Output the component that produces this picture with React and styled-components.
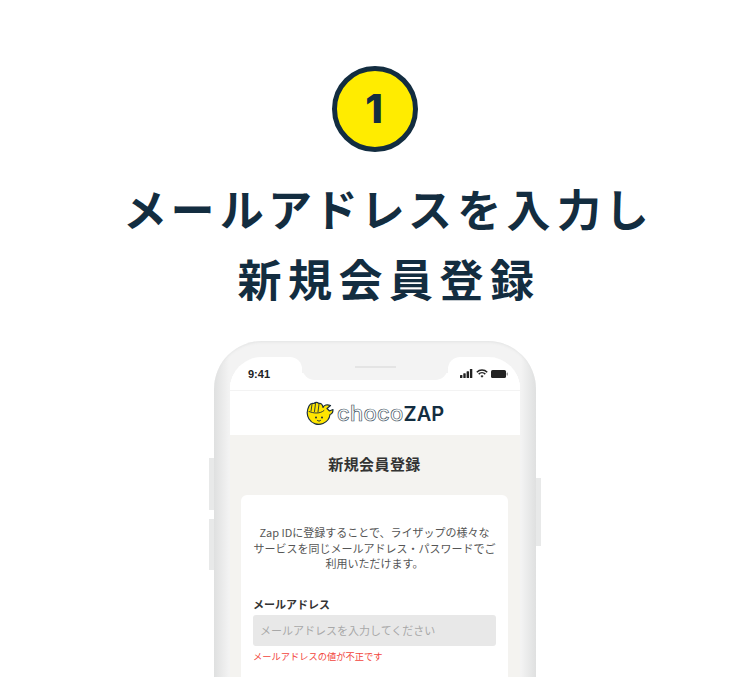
import React from 'react'
import styled, { createGlobalStyle } from 'styled-components'

const navy = '#132d40'
const cjk = '"Noto Sans CJK JP", "Noto Sans", sans-serif'

const GlobalStyle = createGlobalStyle`
  html, body {
    margin: 0;
    padding: 0;
    background: #fff;
  }
  *, *::before, *::after {
    box-sizing: border-box;
  }
`

const Page = styled.main`
  width: 750px;
  height: 677px;
  overflow: hidden;
  display: flex;
  flex-direction: column;
  align-items: center;
  padding-top: 66px;
  background: #fff;
  font-family: ${cjk};
`

const StepBadge = styled.div`
  flex: none;
  width: 86px;
  height: 86px;
  padding-right: 2px;
  border-radius: 50%;
  border: 5px solid ${navy};
  background: #ffec00;
  color: ${navy};
  display: flex;
  align-items: center;
  justify-content: center;
  font-family: Inter, sans-serif;
  font-size: 40px;
  font-weight: 800;
  line-height: 1;
`

const Heading = styled.h1`
  flex: none;
  margin: 21px 0 0;
  padding-left: 28px;
  text-align: center;
  color: ${navy};
  font-size: 44px;
  font-weight: 700;
  line-height: 70px;
  letter-spacing: 6.5px;
  font-feature-settings: "palt";
  white-space: nowrap;
`

const Phone = styled.div`
  position: relative;
  flex: none;
  width: 322px;
  height: 640px;
  margin-top: 28px;
  padding: 16px;
  border-radius: 48px;
  background: linear-gradient(90deg, #dfe0e0 0, #f3f3f3 15px, #f3f3f3 calc(100% - 15px), #dfe0e0 100%);
  box-shadow: inset 0 2px 3px -1px #e2e3e3;
`

const SideButton = styled.span`
  position: absolute;
  top: ${(p) => p.$top}px;
  ${(p) => (p.$right ? 'right: -5px;' : 'left: -5px;')}
  width: 5px;
  height: ${(p) => p.$height}px;
  background: #e8e9e9;
`

const Screen = styled.div`
  height: 100%;
  display: flex;
  flex-direction: column;
  border-radius: 32px;
  overflow: hidden;
  background: #fff;
`

const StatusBar = styled.div`
  flex: none;
  height: 34px;
  display: grid;
  grid-template-columns: 72px 1fr 72px;
  background: linear-gradient(#f3f3f3 50%, #fff 50%);
  border-bottom: 1px solid #f3f3f3;
`

const Ear = styled.div`
  display: flex;
  align-items: center;
  gap: 3px;
  padding: ${(p) => (p.$right ? '0 12px 0 12px' : '0 0 0 18px')};
  background: #fff;
  border-radius: ${(p) => (p.$right ? '12px 0 0 0' : '0 12px 0 0')};
  color: #222;
  font-family: "Liberation Sans", sans-serif;
  font-size: 11px;
  font-weight: 700;
`

const Notch = styled.div`
  height: 23px;
  display: flex;
  justify-content: center;
  padding-top: 9px;
  background: #f3f3f3;
  border-radius: 0 0 13px 13px;

  &::after {
    content: '';
    width: 41px;
    height: 2px;
    background: #e4e4e4;
  }
`

const Brand = styled.header`
  flex: none;
  height: 44px;
  display: flex;
  align-items: center;
  justify-content: center;
  gap: 3px;
  background: #fff;
`

const BrandName = styled.div`
  display: flex;
  align-items: baseline;
  font-family: Inter, sans-serif;
  line-height: 1;
`

const BrandLight = styled.span`
  font-size: 22px;
  font-weight: 500;
  letter-spacing: 0.3px;
  color: #fff;
  -webkit-text-stroke: 0.7px #3f5564;
`

const BrandBold = styled.span`
  font-size: 20px;
  font-weight: 600;
  color: ${navy};
`

const Content = styled.div`
  flex: 1;
  display: flex;
  flex-direction: column;
  padding: 0 12px 0 11px;
  background: #f4f3f0;
`

const PageTitle = styled.h2`
  margin: 0;
  height: 60px;
  padding-bottom: 4px;
  display: flex;
  align-items: center;
  justify-content: center;
  font-size: 15px;
  font-weight: 700;
  letter-spacing: 0.4px;
  color: #333;
`

const Card = styled.section`
  flex: 1;
  padding: 30px 12px 0 12px;
  background: #fff;
  border-radius: 6px 6px 0 0;
`

const Intro = styled.p`
  margin: 0 0 24px;
  font-size: 11px;
  line-height: 15.6px;
  text-align: center;
  color: #555;
`

const FieldLabel = styled.label`
  display: block;
  font-size: 11px;
  font-weight: 700;
  line-height: 16px;
  color: #333;
  margin-bottom: 3px;
`

const TextInput = styled.input`
  display: block;
  width: 100%;
  height: 31px;
  padding: 0 7px;
  border: none;
  border-radius: 3px;
  background: #e8e8e8;
  font-family: ${cjk};
  font-size: 11px;

  &::placeholder {
    color: #a8a8a8;
    opacity: 1;
  }
`

const ErrorText = styled.p`
  margin: 3px 0 0;
  font-size: 9.25px;
  line-height: 14px;
  color: #f2453d;
`

function SignalIcon() {
  return (
    <svg width="13" height="9" viewBox="0 0 13 9" fill="#222">
      <rect x="0" y="6" width="2.4" height="3" rx="0.5" />
      <rect x="3.3" y="4.3" width="2.4" height="4.7" rx="0.5" />
      <rect x="6.6" y="2.3" width="2.4" height="6.7" rx="0.5" />
      <rect x="9.9" y="0" width="2.4" height="9" rx="0.5" />
    </svg>
  )
}

function WifiIcon() {
  return (
    <svg width="12" height="9" viewBox="0 0 12 9" fill="none" stroke="#222" strokeWidth="1.5">
      <path d="M0.8 3.2a7.4 7.4 0 0 1 10.4 0" />
      <path d="M2.7 5.1a4.7 4.7 0 0 1 6.6 0" />
      <path d="M6 8.800 4.500 7a2.100 2.100 0 0 1 3 0z" fill="#222" stroke="none" />
    </svg>
  )
}

function BatteryIcon() {
  return (
    <svg width="17" height="8" viewBox="0 0 17 8">
      <rect x="0" y="0" width="15" height="8" rx="1.6" fill="#222" />
      <rect x="15.6" y="2.6" width="1.2" height="2.8" rx="0.5" fill="#888" />
    </svg>
  )
}

function LogoMark() {
  return (
    <svg width="28" height="25" viewBox="0 0 28 25">
      <path
        d="M3 5C1 9 .5 14 3 18c3 5 9 6.500 14 4.500 4-1.700 6.500-5 7-9 1.800-.5 3-2.500 3-5l-3.500 1.500-2.500-2.500 3.500-3C21 3 18 4 17 6.500 16.500 3.500 15 2 13 2.500 11 1 9 1.500 8 2.500 6 2 4 3 3 5z"
        fill="#ffe600"
        stroke="#1c2f3c"
        strokeWidth="1.200"
        strokeLinejoin="round"
      />
      <path
        d="M6 3.500 5 10M9.500 2.500 8.500 10.500M13 3l-1 8M3 10.500c5 2 11 2.500 15-1"
        fill="none"
        stroke="#1c2f3c"
        strokeWidth="0.900"
        strokeLinecap="round"
      />
      <circle cx="10" cy="16.500" r="1" fill="#1c2f3c" />
      <circle cx="16" cy="16.500" r="1" fill="#1c2f3c" />
      <path d="M11.500 19.500c1 .8 2.200.8 3 0" fill="none" stroke="#1c2f3c" strokeWidth="1" strokeLinecap="round" />
    </svg>
  )
}

export default function App() {
  return (
    <>
      <GlobalStyle />
      <Page>
        <StepBadge>1</StepBadge>
        <Heading>
          メールアドレスを入力し
          <br />
          新規会員登録
        </Heading>
        <Phone>
          <SideButton $top={117} $height={52} />
          <SideButton $top={178} $height={51} />
          <SideButton $right $top={137} $height={68} />
          <Screen>
            <StatusBar>
              <Ear>9:41</Ear>
              <Notch />
              <Ear $right>
                <SignalIcon />
                <WifiIcon />
                <BatteryIcon />
              </Ear>
            </StatusBar>
            <Brand>
              <LogoMark />
              <BrandName>
                <BrandLight>choco</BrandLight>
                <BrandBold>ZAP</BrandBold>
              </BrandName>
            </Brand>
            <Content>
              <PageTitle>新規会員登録</PageTitle>
              <Card>
                <Intro>
                  Zap IDに登録することで、ライザップの様々な
                  <br />
                  サービスを同じメールアドレス・パスワードでご
                  <br />
                  利用いただけます。
                </Intro>
                <FieldLabel htmlFor="email">メールアドレス</FieldLabel>
                <TextInput id="email" placeholder="メールアドレスを入力してください" />
                <ErrorText>メールアドレスの値が不正です</ErrorText>
              </Card>
            </Content>
          </Screen>
        </Phone>
      </Page>
    </>
  )
}
